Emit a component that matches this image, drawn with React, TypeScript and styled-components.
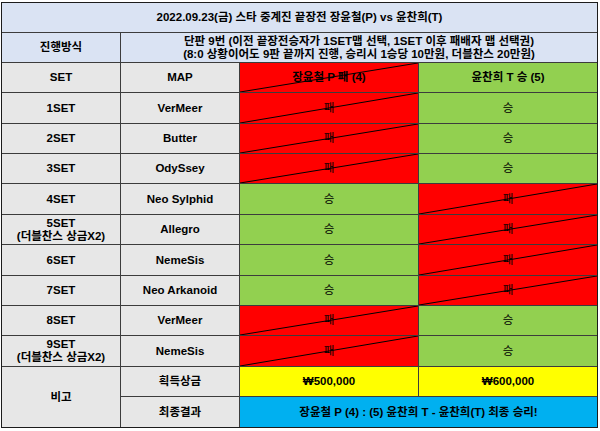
import React from "react";
import styled, { createGlobalStyle } from "styled-components";

const GlobalStyle = createGlobalStyle`
  html, body {
    margin: 0;
    padding: 0;
    background: #ffffff;
  }
  body {
    font-family: "Liberation Sans", "Noto Sans CJK KR", sans-serif;
    color: #000;
  }
`;

const Sheet = styled.div`
  padding: 2px 0 0 1px;
`;

const Grid = styled.div`
  display: grid;
  width: fit-content;
  grid-template-columns: 118px 118px 178px 178px;
  grid-template-rows: 29px 29px 29px 30px 29px 29px 30px 29px 30px 29px 29px 30px 29px 30px;
  gap: 1px;
  background: #3c3c3c;
  border: 1px solid #1c1c1c;
`;

type CellProps = {
  $bg: string;
  $weight?: number;
  $col?: number;
  $row?: number;
};

const Cell = styled.div<CellProps>`
  position: relative;
  display: flex;
  align-items: center;
  justify-content: center;
  text-align: center;
  background: ${(p) => p.$bg};
  font-size: 11.5px;
  line-height: 13px;
  font-weight: ${(p) => p.$weight ?? 700};
  white-space: nowrap;
  overflow: hidden;
  grid-column: span ${(p) => p.$col ?? 1};
  grid-row: span ${(p) => p.$row ?? 1};
`;

const Label = styled.span`
  position: relative;
  z-index: 0;
`;

const Slash = styled.svg`
  position: absolute;
  inset: 0;
  width: 100%;
  height: 100%;
  z-index: 1;
  pointer-events: none;
`;

const C = {
  head: "#dae3f3",
  gray: "#e7e7e7",
  red: "#ff0000",
  green: "#92d050",
  yellow: "#ffff00",
  blue: "#00b0f0",
};

const Diagonal = () => (
  <Slash viewBox="0 0 100 100" preserveAspectRatio="none">
    <line x1="0" y1="100" x2="100" y2="0" stroke="#000" strokeWidth="1" vectorEffect="non-scaling-stroke" />
  </Slash>
);

type Result = "W" | "L";

const ResultCell = ({ r, text, bold }: { r: Result; text: string; bold?: boolean }) => (
  <Cell $bg={r === "W" ? C.green : C.red} $weight={bold ? 700 : 400}>
    <Label>{text}</Label>
    {r === "L" && <Diagonal />}
  </Cell>
);

const sets: { set: React.ReactNode; map: string; p: Result }[] = [
  { set: "1SET", map: "VerMeer", p: "L" },
  { set: "2SET", map: "Butter", p: "L" },
  { set: "3SET", map: "OdySsey", p: "L" },
  { set: "4SET", map: "Neo Sylphid", p: "W" },
  { set: <>5SET<br />(더블찬스 상금X2)</>, map: "Allegro", p: "W" },
  { set: "6SET", map: "NemeSis", p: "W" },
  { set: "7SET", map: "Neo Arkanoid", p: "W" },
  { set: "8SET", map: "VerMeer", p: "L" },
  { set: <>9SET<br />(더블찬스 상금X2)</>, map: "NemeSis", p: "L" },
];

export default function App() {
  return (
    <>
      <GlobalStyle />
      <Sheet>
        <Grid>
          <Cell $bg={C.head} $col={4}>
            2022.09.23(금) 스타 중계진 끝장전 장윤철(P) vs 윤찬희(T)
          </Cell>
          <Cell $bg={C.head}>진행방식</Cell>
          <Cell $bg={C.head} $col={3}>
            단판 9번 (이전 끝장전승자가 1SET맵 선택, 1SET 이후 패배자 맵 선택권)
            <br />
            (8:0 상황이어도 9판 끝까지 진행, 승리시 1승당 10만원, 더블찬스 20만원)
          </Cell>
          <Cell $bg={C.gray}>SET</Cell>
          <Cell $bg={C.gray}>MAP</Cell>
          <ResultCell r="L" text="장윤철 P 패 (4)" bold />
          <ResultCell r="W" text="윤찬희 T 승 (5)" bold />
          {sets.map((s, i) => (
            <React.Fragment key={i}>
              <Cell $bg={C.gray}>
                <div>{s.set}</div>
              </Cell>
              <Cell $bg={C.gray}>{s.map}</Cell>
              <ResultCell r={s.p} text={s.p === "W" ? "승" : "패"} />
              <ResultCell r={s.p === "W" ? "L" : "W"} text={s.p === "W" ? "패" : "승"} />
            </React.Fragment>
          ))}
          <Cell $bg={C.gray} $row={2}>비고</Cell>
          <Cell $bg={C.gray}>획득상금</Cell>
          <Cell $bg={C.yellow}>₩500,000</Cell>
          <Cell $bg={C.yellow}>₩600,000</Cell>
          <Cell $bg={C.gray}>최종결과</Cell>
          <Cell $bg={C.blue} $col={2}>
            장윤철 P (4) : (5) 윤찬희 T - 윤찬희(T) 최종 승리!
          </Cell>
        </Grid>
      </Sheet>
    </>
  );
}
